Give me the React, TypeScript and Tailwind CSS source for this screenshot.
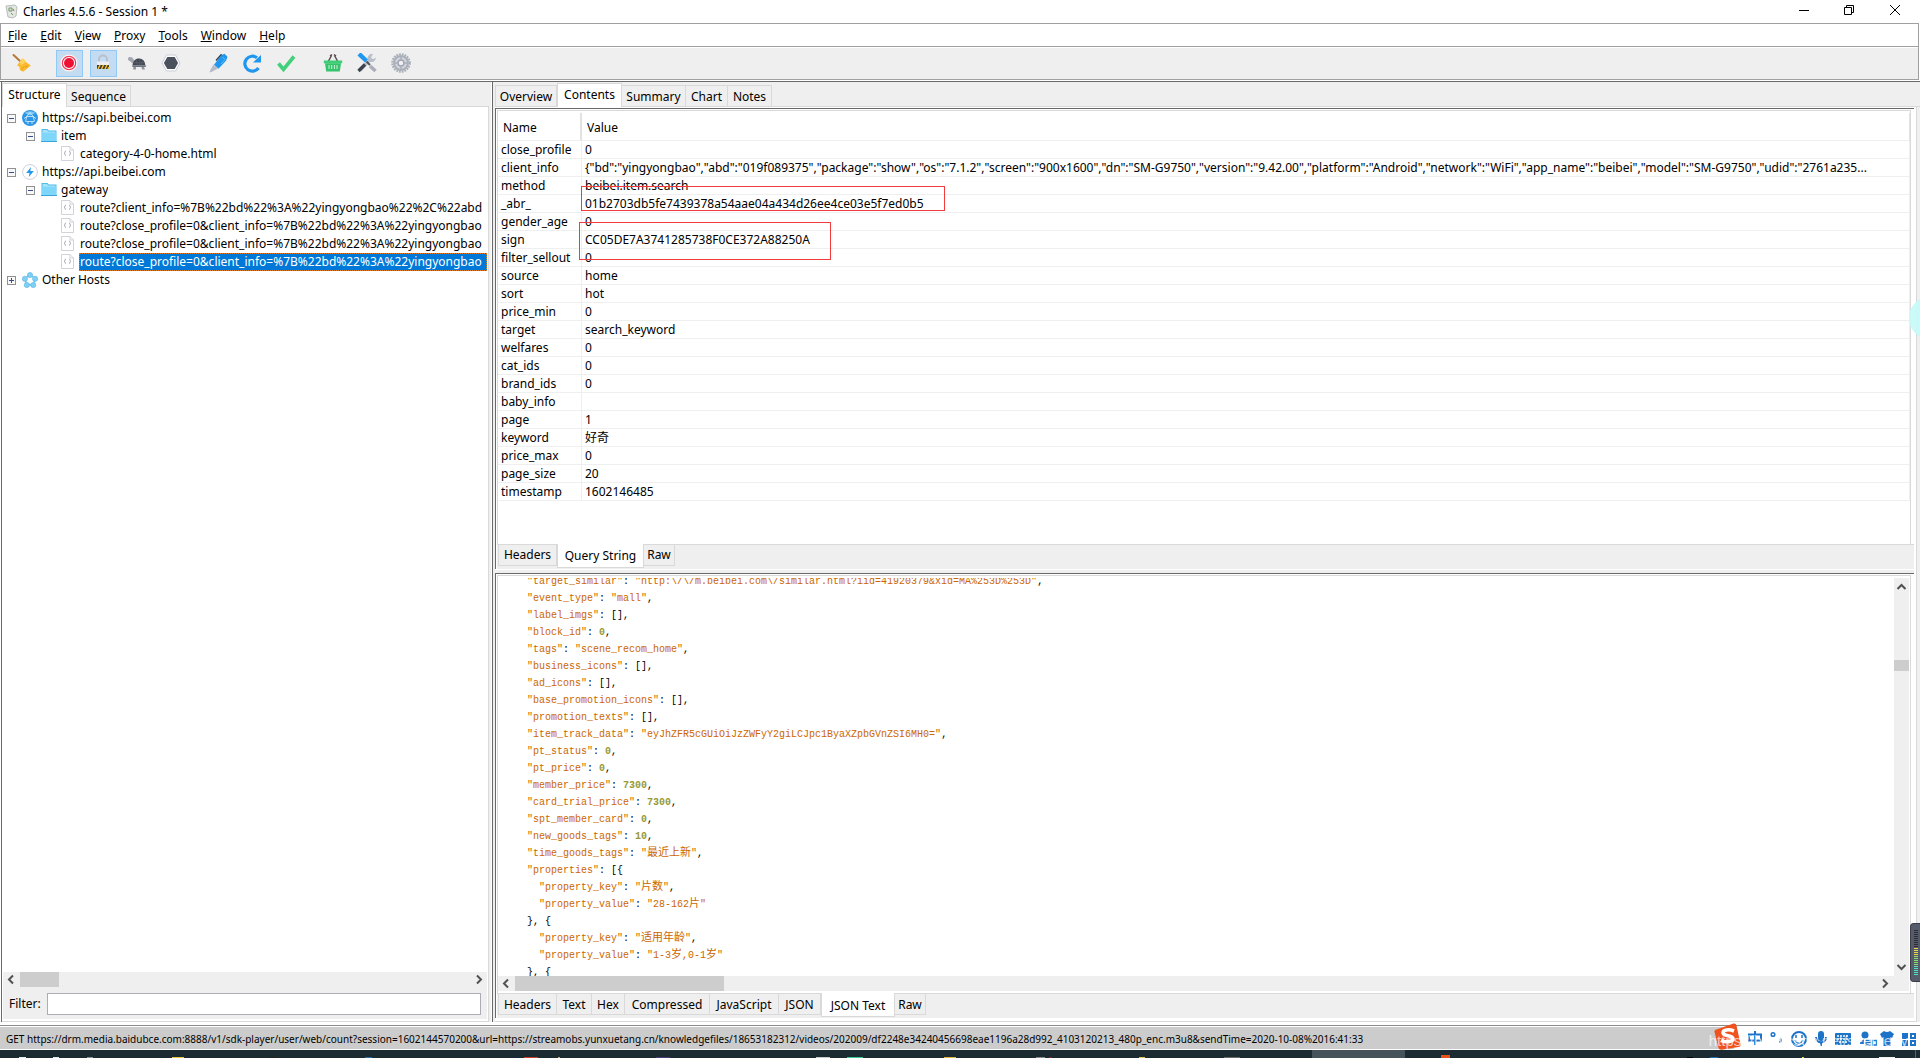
import type { ReactNode } from "react"

const menus = ["File", "Edit", "View", "Proxy", "Tools", "Window", "Help"]

const leftTabs = [
  { label: "Structure", width: "w-[65px]", active: true },
  { label: "Sequence", width: "w-[64px]" },
]

const topTabs = [
  { label: "Overview", width: "w-[62px]" },
  { label: "Contents", width: "w-[65px]", active: true },
  { label: "Summary", width: "w-[64px]" },
  { label: "Chart", width: "w-[42px]" },
  { label: "Notes", width: "w-[44px]" },
]

const requestTabs = [
  { label: "Headers", width: "w-[59px]" },
  { label: "Query String", width: "w-[87px]", active: true },
  { label: "Raw", width: "w-[31px]" },
]

const responseTabs = [
  { label: "Headers", width: "w-[59px]" },
  { label: "Text", width: "w-[35px]" },
  { label: "Hex", width: "w-[33px]" },
  { label: "Compressed", width: "w-[85px]" },
  { label: "JavaScript", width: "w-[69px]" },
  { label: "JSON", width: "w-[42px]" },
  { label: "JSON Text", width: "w-[74px]", active: true },
  { label: "Raw", width: "w-[31px]" },
]

const route = "route?close_profile=0&client_info=%7B%22bd%22%3A%22yingyongbao"

const tree = [
  { depth: 0, toggle: "-", icon: "globe", label: "https://sapi.beibei.com" },
  { depth: 1, toggle: "-", icon: "folder", label: "item" },
  { depth: 2, toggle: "", icon: "json", label: "category-4-0-home.html" },
  { depth: 0, toggle: "-", icon: "bolt", label: "https://api.beibei.com" },
  { depth: 1, toggle: "-", icon: "folder", label: "gateway" },
  { depth: 2, toggle: "", icon: "json", label: "route?client_info=%7B%22bd%22%3A%22yingyongbao%22%2C%22abd" },
  { depth: 2, toggle: "", icon: "json", label: route },
  { depth: 2, toggle: "", icon: "json", label: route },
  { depth: 2, toggle: "", icon: "json", label: route, selected: true },
  { depth: 0, toggle: "+", icon: "hosts", label: "Other Hosts" },
]

const indents = ["pl-1", "pl-[23px]", "pl-[42px]"]

const params = [
  ["close_profile", "0"],
  ["client_info", '{"bd":"yingyongbao","abd":"019f089375","package":"show","os":"7.1.2","screen":"900x1600","dn":"SM-G9750","version":"9.42.00","platform":"Android","network":"WiFi","app_name":"beibei","model":"SM-G9750","udid":"2761a235...'],
  ["method", "beibei.item.search"],
  ["_abr_", "01b2703db5fe7439378a54aae04a434d26ee4ce03e5f7ed0b5"],
  ["gender_age", "0"],
  ["sign", "CC05DE7A3741285738F0CE372A88250A"],
  ["filter_sellout", "0"],
  ["source", "home"],
  ["sort", "hot"],
  ["price_min", "0"],
  ["target", "search_keyword"],
  ["welfares", "0"],
  ["cat_ids", "0"],
  ["brand_ids", "0"],
  ["baby_info", ""],
  ["page", "1"],
  ["keyword", "好奇"],
  ["price_max", "0"],
  ["page_size", "20"],
  ["timestamp", "1602146485"],
]

const json = [
  '"target_similar": "http:\\/\\/m.beibei.com\\/similar.html?iid=41920379&xid=MA%253D%253D",',
  '"event_type": "mall",',
  '"label_imgs": [],',
  '"block_id": 0,',
  '"tags": "scene_recom_home",',
  '"business_icons": [],',
  '"ad_icons": [],',
  '"base_promotion_icons": [],',
  '"promotion_texts": [],',
  '"item_track_data": "eyJhZFR5cGUiOiJzZWFyY2giLCJpc1ByaXZpbGVnZSI6MH0=",',
  '"pt_status": 0,',
  '"pt_price": 0,',
  '"member_price": 7300,',
  '"card_trial_price": 7300,',
  '"spt_member_card": 0,',
  '"new_goods_tags": 10,',
  '"time_goods_tags": "最近上新",',
  '"properties": [{',
  '  "property_key": "片数",',
  '  "property_value": "28-162片"',
  "}, {",
  '  "property_key": "适用年龄",',
  '  "property_value": "1-3岁,0-1岁"',
  "}, {",
]

const status =
  "GET https://drm.media.baidubce.com:8888/v1/sdk-player/user/web/count?session=1602144570200&url=https://streamobs.yunxuetang.cn/knowledgefiles/18653182312/videos/202009/df2248e34240456698eae1196a28d992_4103120213_480p_enc.m3u8&sendTime=2020-10-08%2016:41:33"

// slices of the desktop task bar that show under the window: x, width, y, height, colour
const taskbar: [number, number, number, number, string][] = [
  [19, 7, 7, 1, "#e8ecee"],
  [53, 6, 7, 1, "#e8ecee"],
  [87, 6, 7, 1, "#8a9599"],
  [172, 12, 7, 1, "#e8c64a"],
  [270, 7, 7, 1, "#2b1f1c"],
  [365, 7, 7, 1, "#1d6fb0"],
  [524, 14, 7, 1, "#c8402a"],
  [558, 2, 7, 1, "#c9b27a"],
  [656, 14, 7, 1, "#4a3a7a"],
  [816, 14, 7, 1, "#c9c9c9"],
  [847, 16, 7, 1, "#3cc795"],
  [944, 12, 7, 1, "#e3b53c"],
  [1036, 9, 7, 1, "#8d8d8d"],
  [1049, 3, 7, 1, "#a01818"],
  [1139, 6, 7, 1, "#e8c64a"],
  [1224, 16, 7, 1, "#6a6a6a"],
  [1312, 93, 0, 8, "#46535a"],
  [1441, 9, 5, 3, "#e8501e"],
  [1687, 6, 7, 1, "#000000"],
  [1710, 8, 7, 1, "#1d6fb0"],
  [1802, 2, 7, 1, "#f4e02a"],
  [1879, 16, 7, 1, "#f2f2f2"],
  [1915, 1, 0, 8, "#55636a"],
]

function Svg({ children, size = 20 }: { children: ReactNode; size?: number }) {
  return (
    <svg width={size} height={size} viewBox={`0 0 ${size} ${size}`} fill="none" className="shrink-0" aria-hidden="true">
      {children}
    </svg>
  )
}

function ToolButton({ label, on, children }: { label: string; on?: boolean; children: ReactNode }) {
  return (
    <button
      aria-label={label}
      className={`flex size-[27px] items-center justify-center border pr-px pb-px ${on ? "border-[#90c8f6] bg-[#c3dcf1]" : "border-transparent"}`}
    >
      <Svg>{children}</Svg>
    </button>
  )
}

function Toolbar() {
  return (
    <div className="flex h-8 items-center gap-5 border-b border-[#a0a0a0] bg-[#efefef] pl-2">
      <ToolButton label="Clear">
        <path d="M1.500 2l6.500 6" stroke="#b5783a" strokeWidth="2" strokeLinecap="round" />
        <path d="M10.500 5.500l3 3.200 5.300 3.800-7.600 6.300-3-1.500-1-3.600-2.200-1.500z" fill="#fbb92e" />
        <path d="M7.500 8.500l3.500-3.300 3 3-4.800 4.600z" fill="#fdd45c" />
        <path d="M9.500 16.500l2.500-3M13 14.500l3-2" stroke="#e59a18" />
      </ToolButton>
      <div className="flex gap-[7px]">
        <ToolButton label="Record" on>
          <circle cx="10" cy="10" r="8.600" fill="#fff" stroke="#dadde3" strokeWidth=".6" />
          <circle cx="10" cy="10" r="6.700" stroke="#f23b57" strokeWidth="1.200" />
          <circle cx="10" cy="10" r="5" fill="#ee1133" />
        </ToolButton>
        <ToolButton label="SSL proxying" on>
          <path d="M6 10V6.500a4 4 0 0 1 8 0V10" stroke="#b9bec8" strokeWidth="1.800" />
          <rect x="4" y="8.500" width="12" height="4" fill="#eceef2" />
          <rect x="4" y="12" width="12" height="4" fill="#3d3a33" />
          <path d="M5 16l2-4M8.500 16l2-4M12 16l2-4M15 16l1-2" stroke="#f5c02c" strokeWidth="1.500" />
        </ToolButton>
        <ToolButton label="Throttling">
          <path d="M.8 5.500a2.600 2 0 0 1 4.400-.9c1 .8 1.300 2.200 2.400 3.400l-1.800 2.500C4 9.500 3.400 7.800 1.500 7.500z" fill="#a3a8b3" />
          <path d="M5.500 12.500C6 7.500 9 5 12.500 5.500c3.500.3 5.500 3 5.800 7z" fill="#434852" />
          <path d="M5 12.500h14.500l-1 1.500h-13z" fill="#6e7480" />
          <path d="M6.500 14h2.500v2.500H6zM14.500 14H17l1 2.500h-3z" fill="#8f95a1" />
          <path d="M9 7l1.500 5M13 6l-.5 6M16 8l-2 4M7 9.800h11" stroke="#5f6570" strokeWidth=".7" />
        </ToolButton>
        <ToolButton label="Breakpoints">
          <path d="M5.500 2h9l4.500 8-4.500 8h-9L1 10z" fill="#fff" stroke="#c9cdd6" />
          <path d="M6.300 4h7.400l3.400 6-3.400 6H6.300L2.900 10z" fill="#4a505c" />
        </ToolButton>
      </div>
      <div className="flex gap-[7px]">
        <ToolButton label="Compose">
          <path d="M13.500 2l3-1.200 3 3-1.500 4-7.500 8-4.500-4z" fill="#1f97ee" />
          <path d="M13.500 1.200L8 7.500" stroke="#33404f" strokeWidth="1.300" />
          <path d="M5.500 11.500l4.500 4-6 3.200-2.500.8.800-2.500z" fill="#b5bcc8" />
          <path d="M14.500 4l2.500 2.500-4 4.500" stroke="#62bdf8" />
        </ToolButton>
        <ToolButton label="Repeat">
          <path d="M16.500 15A7.500 7.500 0 1 1 15 4.800" stroke="#1f97ee" strokeWidth="3.200" />
          <path d="M19 2v7.500h-8z" fill="#1f97ee" />
        </ToolButton>
        <ToolButton label="Validate">
          <path d="M2.500 10.500l5 6L18 3.500" stroke="#44d07b" strokeWidth="3.600" />
        </ToolButton>
      </div>
      <div className="flex gap-[7px]">
        <ToolButton label="Purchase">
          <path d="M5 9l3.500-6.500M15 9l-3.500-6.500M7 3l2-1.500M13 3l-2-1.500" stroke="#5a4a50" strokeWidth="1.500" />
          <path d="M.8 7.500h18.400v2.800H.8z" fill="#3ecf76" />
          <path d="M2 10.300h16l-1.200 8.200H3.200z" fill="#35c36b" />
          <path d="M6 12v4M8.700 12v4M11.400 12v4M14 12v4" stroke="#c9f5da" />
        </ToolButton>
        <ToolButton label="Tools">
          <path d="M18.800 4.500a4.300 4.300 0 0 1-5.800 4.200L4.500 18.500 1.500 15.500 11 7a4.300 4.300 0 0 1 5-6l-2 3.500 2 1.800z" fill="#b9bec9" />
          <path d="M2 .8L9.500 8" stroke="#1f97ee" strokeWidth="4.400" />
          <path d="M9.500 8.500l3.500 3.500" stroke="#4a505c" strokeWidth="2" />
          <path d="M13 13l5.500 5" stroke="#a9aeb9" strokeWidth="3.500" />
          <path d="M1.500 18L8 11.500" stroke="#3c424d" strokeWidth="3.200" />
        </ToolButton>
        <ToolButton label="Settings">
          <circle cx="10" cy="10" r="8.800" stroke="#a9aeb9" strokeWidth="2" strokeDasharray="1.800 1" />
          <circle cx="10" cy="10" r="7" fill="#d3d6dd" stroke="#a9aeb9" strokeWidth="2" />
          <circle cx="10" cy="10" r="3" fill="#efefef" stroke="#a0a5b1" strokeWidth="1.500" />
          <path d="M10 3v4M10 13v4M3 10h4M13 10h4" stroke="#a9aeb9" strokeWidth="1.500" />
        </ToolButton>
      </div>
    </div>
  )
}

function TreeIcon({ name }: { name: string }) {
  if (name === "globe")
    return (
      <Svg size={16}>
        <circle cx="8" cy="8" r="8" fill="#2f96e6" />
        <path d="M2.500 3a8 6 0 0 1 11 0L8 5.500z" fill="#7cc8f7" />
        <path d="M3.500 11.500L5 6l3-3.500L11 6l1.500 5.500M4 11.500h8M5 6.500h6M2 8.500l3-2M14 8.500l-3-2M6 12v2M10 12v2" stroke="#d8f1ff" strokeWidth=".8" />
      </Svg>
    )
  if (name === "bolt")
    return (
      <Svg size={16}>
        <circle cx="8" cy="8" r="7.400" fill="#fff" stroke="#cdd1da" />
        <path d="M9 3L4.200 9h3.300L6.800 13l5-6H8.300z" fill="#1f97ee" />
      </Svg>
    )
  if (name === "folder")
    return (
      <Svg size={16}>
        <path d="M.5 1h6l1.300 1.500H15.500V14H.5z" fill="#4fbbea" />
        <path d="M1.500 2H6l1.300 1.500H14.500V5H1.500z" fill="#a5e3fc" />
        <path d="M1 4.700h14V13H1z" fill="#7fd6fb" />
        <path d="M0 13.500h16" stroke="#3aa5dc" />
      </Svg>
    )
  if (name === "hosts")
    return (
      <Svg size={16}>
        <circle cx="8" cy="8.300" r="4.500" stroke="#6cc4ec" strokeWidth="1.500" />
        <g fill="#7fd0f5" stroke="#5ab6e4" strokeWidth=".6">
          <circle cx="8" cy="3" r="2.600" />
          <circle cx="2.900" cy="6.800" r="2.600" />
          <circle cx="13.100" cy="6.800" r="2.600" />
          <circle cx="4.800" cy="13" r="2.600" />
          <circle cx="11.200" cy="13" r="2.600" />
        </g>
      </Svg>
    )
  return (
    <Svg size={16}>
      <path d="M1.500.5h8.500l3.500 3.500v10.500h-12z" fill="#fff" stroke="#d2d3da" />
      <path d="M10 .5V4h3.500" stroke="#d2d3da" />
      <path d="M6 5c-1.500 0-.5 2-1.800 2.300C5.500 7.500 4.500 9.500 6 9.500M9 5c1.500 0 .5 2 1.800 2.300C9.500 7.500 10.500 9.500 9 9.500" stroke="#9a9ba6" strokeWidth=".9" />
    </Svg>
  )
}

type Tab = { label: string; width: string; active?: boolean }

function Tabs({ tabs, bottom, inset }: { tabs: Tab[]; bottom?: boolean; inset?: string }) {
  const edge = bottom ? "items-start border-t" : "items-end border-b"
  return (
    <div role="tablist" className={`flex h-[25px] shrink-0 border-[#d9d9d9] bg-[#efefef] ${edge} ${inset ?? ""}`}>
      {tabs.map((tab) => {
        const side = bottom
          ? tab.active ? "-mt-px h-6 border-x border-b bg-white pt-[2px]" : "h-[21px] border-b border-r pt-px first:border-l"
          : tab.active ? "-mb-px h-6 border-x border-t bg-white pb-[2px]" : "h-[21px] border-t border-r pt-[2px] first:border-l"
        return (
          <button key={tab.label} role="tab" aria-selected={!!tab.active} className={`flex items-center justify-center whitespace-nowrap border-[#d9d9d9] ${side} ${tab.width}`}>
            {tab.label}
          </button>
        )
      })}
    </div>
  )
}

function Chevron({ d }: { d: string }) {
  return (
    <svg width="15" height="15" viewBox="0 0 15 15" fill="none" className="shrink-0" aria-hidden="true">
      <path d={d} stroke="#505050" strokeWidth="2" />
    </svg>
  )
}

function HScroll({ thumb }: { thumb: string }) {
  return (
    <div className="flex h-[15px] shrink-0 items-center bg-[#efefef]">
      <Chevron d="M10 3.500l-4 4 4 4" />
      <div className={`ml-[2px] h-full bg-[#cdcdcd] ${thumb}`} />
      <div className="flex-1" />
      <Chevron d="M5 3.500l4 4-4 4" />
    </div>
  )
}

function JsonLine({ line }: { line: string }) {
  const parts = line.match(/"[^"]*"|\d+|[^"\d]+/g) ?? []
  return (
    <div className="h-[17px]">
      {"    "}
      {parts.map((part, i) => (
        <span key={i} className={part[0] === '"' ? "text-[#cc6600]" : /\d/.test(part) ? "font-bold text-[#999933]" : ""}>
          {/* Chinese runs are set one size up */}
          {part.split(/([\u4e00-\u9fff]+)/).map((run, j) => (j % 2 ? <span key={j} className="text-[11px]">{run}</span> : run))}
        </span>
      ))}
    </div>
  )
}

function Sidebar() {
  return (
    <div className="ml-px flex w-[490px] shrink-0 flex-col border-l border-[#696969] bg-[#efefef] pr-[2px]">
      <Tabs tabs={leftTabs} />
      <div className="flex min-h-0 flex-1 flex-col border-r border-b border-[#d9d9d9] bg-white px-px pb-[2px]">
        <ul className="flex-1 overflow-hidden pt-[2px]">
          {tree.map((node, i) => (
            <li key={i} className={`flex h-[18px] items-center ${indents[node.depth]}`}>
              {node.toggle ? (
                <button aria-label="Toggle" className="relative size-[9px] shrink-0 border border-[#919191] bg-[#f8f8f8]">
                  <span className="absolute top-[3px] left-px h-px w-[5px] bg-[#3c4c8c]" />
                  {node.toggle === "+" && <span className="absolute top-px left-[3px] h-[5px] w-px bg-[#3c4c8c]" />}
                </button>
              ) : (
                <span className="w-[9px] shrink-0" />
              )}
              <span className="mr-[3px] ml-[6px]">
                <TreeIcon name={node.icon} />
              </span>
              <span
                className={`h-[18px] overflow-hidden whitespace-nowrap border border-dotted leading-4 ${node.selected ? "flex-1 border-[#e07a20] bg-[#0078d7] text-white" : "border-transparent"}`}
              >
                {node.label}
              </span>
            </li>
          ))}
        </ul>
        <HScroll thumb="w-[39px]" />
        <div className="flex h-8 items-center bg-[#efefef] px-[6px] pt-[2px]">
          <label htmlFor="filter" className="w-[38px]">Filter:</label>
          <input id="filter" className="h-[22px] min-w-0 flex-1 border border-[#abadb3] bg-white px-1 outline-none" />
        </div>
      </div>
    </div>
  )
}

function RequestPane() {
  return (
    <div className="relative flex min-h-0 flex-[461] flex-col border-t border-l border-[#696969] bg-white pt-px pl-px">
      <div className="mr-[3px] flex min-h-0 flex-1 flex-col border-t border-l border-r border-[#d9d9d9] pt-[2px]">
        <table className="w-full table-fixed border-separate border-spacing-0">
          <thead>
            <tr className="h-7 text-left">
              <th className="w-[84px] border-r-2 border-b border-r-[#e2e2e2] border-b-[#efefef] pt-[2px] pl-[5px] font-normal">Name</th>
              <th className="border-r border-b border-r-[#e2e2e2] border-b-[#efefef] pt-[2px] pl-[5px] font-normal">Value</th>
            </tr>
          </thead>
          <tbody>
            {params.map(([name, value]) => (
              <tr key={name} className="h-[18px] leading-[17px]">
                <td className="border-r border-b border-[#efefef] pl-[3px]">{name}</td>
                <td className="overflow-hidden whitespace-nowrap border-r border-b border-[#efefef] pl-[3px]">{value}</td>
              </tr>
            ))}
          </tbody>
        </table>
      </div>
      <Tabs tabs={requestTabs} bottom inset="pl-px" />
      {/* highlights over the _abr_ and sign values */}
      <div className="absolute top-[77px] left-[85px] h-[25px] w-[364px] border border-[#f33b3b]" />
      <div className="absolute top-[113px] left-[83px] h-[38px] w-[252px] border border-[#f33b3b]" />
    </div>
  )
}

function ResponsePane() {
  return (
    <div className="flex min-h-0 flex-[445] flex-col border-t border-l border-[#696969] bg-white pt-px pl-px">
      <div className="mr-[3px] flex min-h-0 flex-1 flex-col border-t border-l border-r border-[#d9d9d9] pt-[2px] pr-px pb-[2px]">
        <div className="flex min-h-0 flex-1">
          <div className="flex-1 overflow-hidden">
            <pre className="-mt-[5px] pl-[5px] font-['Liberation_Mono','Noto_Sans_CJK_SC',monospace] text-[10px] leading-[17px]">
              {json.map((line, i) => (
                <JsonLine key={i} line={line} />
              ))}
            </pre>
          </div>
          <div className="flex w-[15px] shrink-0 flex-col items-center bg-[#efefef]">
            <Chevron d="M3.500 11l4-4 4 4" />
            <div className="mt-[67px] h-[11px] w-full bg-[#cdcdcd]" />
            <div className="flex-1" />
            <Chevron d="M3.500 4l4 4 4-4" />
          </div>
        </div>
        <div className="bg-[#efefef] pr-4">
          <HScroll thumb="w-[209px]" />
        </div>
      </div>
      <Tabs tabs={responseTabs} bottom inset="pl-px" />
    </div>
  )
}

function InputMethodBar() {
  return (
    <div className="absolute right-0 bottom-[7px] flex h-7 w-[206px] items-center">
      <div className="absolute top-1 right-0 bottom-[2px] left-5 bg-white" />
      <svg width="206" height="28" viewBox="0 0 206 28" fill="none" className="relative shrink-0" aria-hidden="true">
        <path d="M2.500 6.500Q0 7 .5 9l4 16q.5 2 3 1.800l17-2.800q2.500-.5 2-3L22.500 2.500Q22 0 19.500.5z" fill="#f0521e" />
        <path d="M20 8c-5-2-11-1.500-11 1.800 0 4 10 2 10 6 0 3-7 4-12 1.500" stroke="#fff" strokeWidth="3.600" />
        <g transform="translate(-1 2)">
          <g stroke="#1c73c8" strokeWidth="2">
            <path d="M36 9.500h12v6H36zM42 6v14" />
            <circle cx="60" cy="9.500" r="1.800" strokeWidth="1.500" />
            <path d="M67 13.500c1.500 1 1 3-.5 4" />
            <circle cx="86" cy="14" r="7" />
            <path d="M83 10v3M89 10v3M82 15c1.500 4 6.500 4 8 0" strokeWidth="1.500" />
            <path d="M103 12c0 7 10 7 10 0M108 17v4" />
            <path d="M198 9h4v4h-4zM198 16h4v4h-4z" />
          </g>
          <rect x="105" y="6" width="6" height="10" rx="3" fill="#1c73c8" />
          <rect x="122" y="8" width="16" height="12" rx="1" fill="#1c73c8" />
          <path d="M124 11h12M124 14h12M126 17h8" stroke="#fff" strokeWidth="1.500" strokeDasharray="2 1" />
          <circle cx="152" cy="10" r="3.500" fill="#1c73c8" />
          <path d="M147 19c0-6 10-6 10 0z" fill="#1c73c8" />
          <path d="M151 14h13v7h-13z" fill="#fff" />
          <path d="M152.500 15.500h4.500v2h-4v2.500h4.500M159.500 15.500h4v4.500h-4z" stroke="#1c73c8" strokeWidth="1.300" />
          <path d="M167 9l4-3q3 2 6 0l4 3-2 4-1.500-1v9h-7v-9l-1.500 1z" fill="#1c73c8" />
          <path d="M189 8h6v6h-6zM189 15h6v6h-6z" fill="#1c73c8" />
        </g>
      </svg>
      <span className="absolute right-3 bottom-0 whitespace-nowrap font-['Liberation_Sans',sans-serif] text-[15px] text-white/70">
        https://blog.csdn.net/seemeby
      </span>
    </div>
  )
}

export default function App() {
  return (
    <div className="relative flex h-screen flex-col overflow-hidden bg-white font-['Noto_Sans','Noto_Sans_CJK_SC',sans-serif] text-xs text-black">
      <header className="flex h-[23px] shrink-0 items-center pl-1">
        <Svg size={16}>
          <path d="M2 2l9-1 2 2-1 9-3 2-5-1z" fill="#e3e6e3" stroke="#b9bdb9" />
          <path d="M5 4h3v3H5zM7 9l2 2" stroke="#6a9a5c" />
          <path d="M9 5l1 2" stroke="#d05a4a" />
        </Svg>
        <h1 className="ml-[3px] flex-1 pt-px">Charles 4.5.6 - Session 1 *</h1>
        <div className="flex h-full pr-px pb-[3px]">
          <button aria-label="Minimize" className="flex w-[46px] items-center justify-center">
            <svg width="10" height="10" viewBox="0 0 10 10"><path d="M0 5.500h10" stroke="#000" /></svg>
          </button>
          <button aria-label="Restore" className="flex w-11 items-center justify-center">
            <svg width="10" height="10" viewBox="0 0 10 10" fill="none" stroke="#000"><path d="M.5 2.500h7v7h-7zM2.500 2V.5h7v7H8" /></svg>
          </button>
          <button aria-label="Close" className="flex w-12 items-center justify-center">
            <svg width="10" height="10" viewBox="0 0 10 10" stroke="#000"><path d="M0 0l10 10M10 0L0 10" /></svg>
          </button>
        </div>
      </header>
      <div className="mr-px shrink-0 border-x border-[#a0a0a0]">
        <nav className="flex h-6 items-center gap-[13px] border-y border-[#a0a0a0] pt-px pl-[7px]">
          {menus.map((menu) => (
            <button key={menu}>
              <u>{menu[0]}</u>
              {menu.slice(1)}
            </button>
          ))}
        </nav>
        <div className="pt-px">
          <Toolbar />
        </div>
      </div>
      <main className="mt-px flex min-h-0 flex-1 border-t border-[#696969]">
        <Sidebar />
        <div className="ml-px flex min-w-0 flex-1 flex-col border-l border-[#696969] bg-[#efefef] pl-[2px]">
          <Tabs tabs={topTabs} />
          <div className="mr-[3px] flex min-h-0 flex-1 flex-col border-r border-b border-[#d9d9d9] bg-white pt-px pr-[2px] pb-[3px]">
            <RequestPane />
            <div className="h-1 shrink-0 border-t border-white bg-[#efefef]" />
            <ResponsePane />
          </div>
        </div>
      </main>
      <footer className="mt-[3px] shrink-0 border-t border-[#8c8c8c] pt-px">
        <p className="h-[22px] overflow-hidden whitespace-nowrap bg-[#cccccc] pl-[6px] text-[10px] leading-[24px]">{status}</p>
        <svg width="100%" height="8" viewBox="0 0 1920 8" preserveAspectRatio="xMinYMin slice" className="mt-px block bg-[#1b2b31]" aria-hidden="true">
          {taskbar.map(([x, w, y, h, fill]) => (
            <rect key={x} x={x} y={y} width={w} height={h} fill={fill} />
          ))}
        </svg>
      </footer>
      <div className="absolute top-[296px] -right-[33px] size-11 rounded-full bg-[#c4fbf8]/90" />
      {/* level meter docked to the edge of the screen */}
      <div className="absolute top-[923px] right-0 flex h-[59px] w-[10px] flex-col justify-center gap-px rounded-l-[4px] border border-r-0 border-[#3a3d48] bg-[#565b6b] pl-[3px]">
        {Array.from({ length: 23 }, (_, i) => (
          <span key={i} className={`h-px w-1 ${i < 9 ? "bg-[#2c2e36]" : i < 13 ? "bg-[#e8d94a]" : i < 18 ? "bg-[#8fdc70]" : "bg-[#4fe3c0]"}`} />
        ))}
      </div>
      <InputMethodBar />
    </div>
  )
}
